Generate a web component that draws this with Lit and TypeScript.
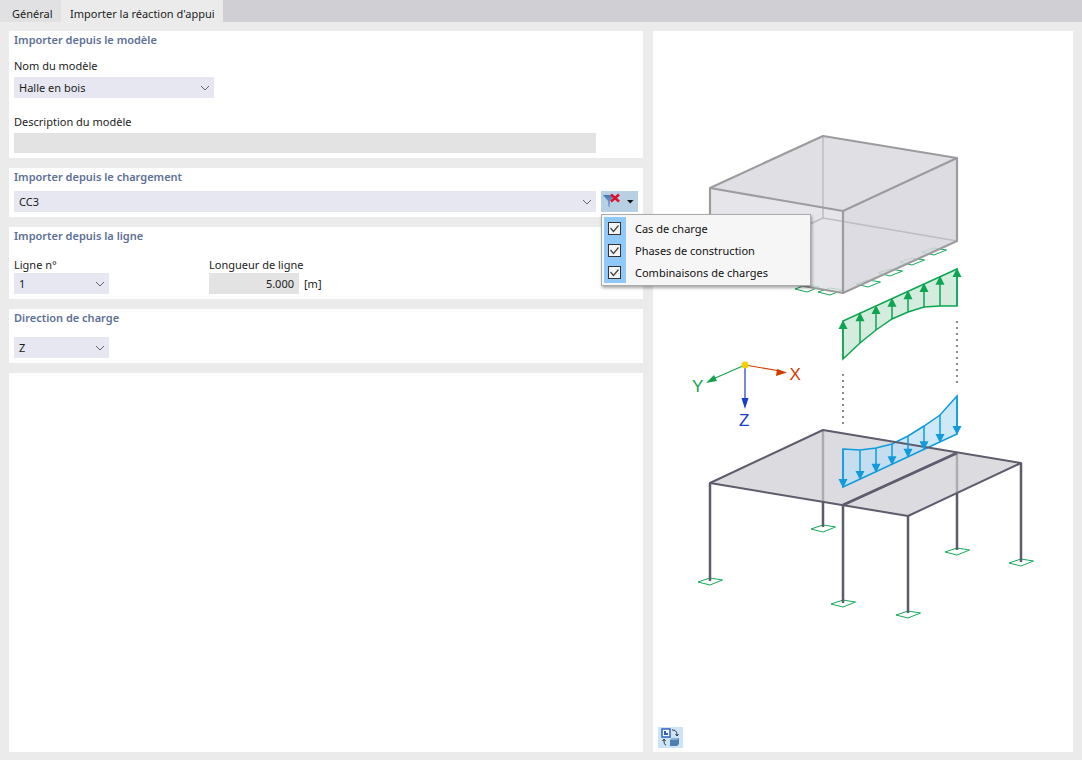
import { LitElement, html, css, svg } from "lit";
import { customElement } from "lit/decorators.js";

const chev = html`<svg class="chev" width="10" height="6" viewBox="0 0 10 6"><path d="M1 1l4 4 4-4" fill="none" stroke="#666" stroke-width="1"/></svg>`;

const GREEN = "#0ea552";
const BLUE = "#0f9bdc";

function support(x: number, y: number) {
  return svg`<path d="M${x - 12} ${y + 1}L${x} ${y - 3}L${x + 12.5} ${y - 1}L${x} ${y + 4}Z" fill="none" stroke="#14a85a" stroke-width="1"/>`;
}

const gx = [843, 860, 876, 892, 908, 924, 940, 957];
const gBottom = [359, 343, 330, 319, 312, 307, 306, 306];
const gTop = gx.map((x) => 321 - ((x - 843) * 52) / 114);
const bTop = [449, 450, 448, 444, 436, 426, 415, 396];
const bBottom = gx.map((x) => 487 - ((x - 843) * 53) / 114);

@customElement("app-root")
export class AppRoot extends LitElement {
  static styles = css`
    :host { display: block; width: 1082px; height: 760px; background: #ebebeb; font-family: "Noto Sans", "Open Sans", sans-serif; font-size: 11px; color: #1c1c1c; overflow: hidden; position: relative; }
    .tabs { display: flex; height: 22px; background: #d0d0d4; }
    .tab { box-sizing: border-box; line-height: 27px; height: 22px; width: 61px; padding-left: 12px; background: #e1e1e3; white-space: nowrap; overflow: hidden; }
    .tab.active { background: #ebebeb; padding-left: 9px; width: 162px; }
    .main { display: grid; grid-template-columns: 634px 420px; gap: 10px; padding: 9px 9px 8px; height: 721px; }
    .left { display: flex; flex-direction: column; gap: 10px; min-height: 0; }
    .sec { background: #fff; box-sizing: border-box; padding: 0 5px; flex: none; display: flex; flex-direction: column; align-items: flex-start; position: relative; }
    .title { color: #5d6f96; font-weight: 600; height: 18px; line-height: 18px; }
    .label { height: 14px; line-height: 14px; }
    .combo { height: 21px; background: #e6e7f1; display: flex; align-items: center; justify-content: space-between; padding: 0 4px 0 5px; box-sizing: border-box; }
    .ro { background: #e3e3e3; height: 20px; }
    .row { display: flex; align-items: flex-start; }
    .col { display: flex; flex-direction: column; }
    .w200 { width: 200px; } .w582 { width: 582px; } .w95 { width: 95px; }
    .num { width: 90px; height: 21px; background: #e3e3e3; line-height: 21px; text-align: right; padding-right: 5px; box-sizing: border-box; }
    .unit { line-height: 21px; margin-left: 5px; }
    .fbtn { width: 37px; height: 21px; background: #b8d0e4; margin-left: 5px; display: flex; align-items: center; }
    .canvas { background: #fff; position: relative; }
    .canvas > svg { display: block; }
    .vbtn { position: absolute; left: 5px; bottom: 4px; width: 25px; height: 21px; background: #cde4f7; display: flex; align-items: center; justify-content: center; }
    .menu { position: absolute; left: 601px; top: 214px; width: 210px; height: 72px; background: #f6f6f6; border: 1px solid #ababab; box-sizing: border-box; box-shadow: 1px 2px 3px rgba(0,0,0,.35); padding: 2px; }
    .item { height: 22px; display: flex; align-items: center; position: relative; color: #111; }
    .strip { width: 22px; height: 22px; background: #90c8f8; display: flex; align-items: center; padding-left: 4px; box-sizing: border-box; margin-right: 9px; }
    .cb { width: 13px; height: 13px; border: 1px solid #333; box-sizing: border-box; background: #f4f4f4; display: block; }
    .grow { flex: 1; }
  `;

  arrowUp(x: number, y: number) {
    return svg`<path d="M${x} ${y - 1}l-4.500 9h9z" fill=${GREEN}/>`;
  }
  arrowDown(x: number, y: number) {
    return svg`<path d="M${x} ${y + 1}l-4.500 -9h9z" fill=${BLUE}/>`;
  }
  curve(xs: number[], ys: number[]) {
    return xs.map((x, i) => `${i ? "L" : "M"}${x} ${ys[i]}`).join("");
  }

  drawing() {
    const gArea = this.curve(gx, gBottom) + `L957 269L843 321Z`;
    const bArea = this.curve(gx, bTop) + `L957 434L843 487Z`;
    return svg`
      <svg width="420" height="721" viewBox="653 31 420 721">
        <!-- supports under the upper box -->
        ${[[807, 288], [830, 291], [868, 283], [890, 272], [912, 261], [934, 251]].map(([x, y]) => support(x, y))}
        <!-- upper box -->
        <path d="M710 188L823 136L957 158L957 241L843 293L710 270Z" fill="#e0e0e5" fill-opacity=".8"/>
        <path d="M710 188L823 136L957 158L843 211Z" fill="#d4d4d8" fill-opacity=".3"/>
        <path d="M843 211L957 158L957 241L843 293Z" fill="#c8c8d0" fill-opacity=".3"/>
        <path d="M823 136L823 218M823 218L710 270M823 218L957 241" fill="none" stroke="#bdbdc2" stroke-width="1.5"/>
        <path d="M710 188L823 136L957 158L843 211ZM710 188L710 270L843 293L843 211M843 293L957 241L957 158" fill="none" stroke="#9c9c9e" stroke-width="2.200" stroke-linejoin="round"/>

        <!-- green diagram -->
        <path d=${gArea} fill="#d3ecde" stroke=${GREEN} stroke-width="1.5"/>
        ${gx.map((x, i) => svg`<path d="M${x} ${gBottom[i]}L${x} ${gTop[i] + 6}" stroke=${GREEN} stroke-width="1.5"/>`)}
        ${gx.map((x, i) => this.arrowUp(x, gTop[i]))}

        <!-- dotted -->
        <path d="M843 374V428M957 321V383" stroke="#4c4c5a" stroke-width="1.3" stroke-dasharray="2 4" fill="none"/>

        <!-- axes -->
        <path d="M745 365L780 371" stroke="#d23c00" stroke-width="1.2"/><path d="M787 372.500l-11 3.500 1-7z" fill="#d23c00"/>
        <path d="M745 365L713 379" stroke="#12a24e" stroke-width="1.2"/><path d="M706 383l8-8 3 6z" fill="#12a24e"/>
        <path d="M745 365V400" stroke="#1a3cc8" stroke-width="1.2"/><path d="M745 409l-3.500-11h7z" fill="#1a3cc8"/>
        <circle cx="745" cy="365" r="3.500" fill="#f4d000"/>
        <text x="789.500" y="380" font-family="Liberation Sans" font-size="17" fill="#d23c00">X</text>
        <text x="692" y="392" font-family="Liberation Sans" font-size="17" fill="#12a24e">Y</text>
        <text x="739" y="426" font-family="Liberation Sans" font-size="17" fill="#1a3cc8">Z</text>

        <!-- supports and columns below the slab -->
        ${[[710, 581], [823, 528], [843, 603], [908, 614], [957, 551], [1021, 562]].map(([x, y]) => support(x, y))}
        ${[[710, 483, 581], [823, 502, 527], [843, 505, 603], [908, 516, 613], [957, 493, 550], [1021, 463, 562]].map(([x, a, b]) => svg`<path d="M${x} ${a}V${b}" stroke="#5e5c6c" stroke-width="2.500"/>`)}

        <!-- slab -->
        <path d="M710 483L823 430L1021 463L908 516Z" fill="#dcdce0"/>
        <path d="M823 431V502M957 454V493" stroke="#ababb2" stroke-width="2.500"/>
        <path d=${bArea} fill="#bcdff4" fill-opacity=".72" stroke=${BLUE} stroke-width="1.5"/>
        <path d="M710 483L823 430L1021 463L908 516Z" fill="none" stroke="#5e5c6c" stroke-width="2" stroke-linejoin="round"/>
        <path d="M843 505L957 453" stroke="#5e5c6c" stroke-width="3"/>
        ${gx.map((x, i) => svg`<path d="M${x} ${bTop[i]}L${x} ${bBottom[i] - 6}" stroke=${BLUE} stroke-width="1.5"/>`)}
        ${gx.map((x, i) => this.arrowDown(x, bBottom[i]))}
      </svg>`;
  }

  render() {
    return html`
      <div class="tabs">
        <div class="tab">Général</div>
        <div class="tab active">Importer la réaction d'appui</div>
        <div class="grow"></div>
      </div>
      <div class="main">
        <div class="left">
          <div class="sec" style="height:127px">
            <div class="title">Importer depuis le modèle</div>
            <div class="label" style="margin-top:10px">Nom du modèle</div>
            <div class="combo w200" style="margin-top:4px">Halle en bois ${chev}</div>
            <div class="label" style="margin-top:17px">Description du modèle</div>
            <div class="combo ro w582" style="margin-top:4px"></div>
          </div>
          <div class="sec" style="height:49px">
            <div class="title">Importer depuis le chargement</div>
            <div class="row" style="margin-top:5px">
              <div class="combo w582">CC3 ${chev}</div>
              <div class="fbtn">
                <svg width="37" height="21" viewBox="0 0 37 21">
                  <defs><linearGradient id="fg" x1="0" y1="0" x2="0" y2="1"><stop offset="0" stop-color="#3f78b4"/><stop offset="1" stop-color="#8fb8dc"/></linearGradient></defs>
                  <path d="M2 4h11l-4 6v7l-2-2v-5z" fill="url(#fg)"/>
                  <path d="M10 3.500l8 7M18 3.500l-8 7" stroke="#e0102a" stroke-width="2.600"/>
                  <path d="M26 9h6.500l-3.250 3.500z" fill="#111"/>
                </svg>
              </div>
            </div>
          </div>
          <div class="sec" style="height:72px">
            <div class="title">Importer depuis la ligne</div>
            <div class="row" style="margin-top:13px">
              <div class="col w95" style="margin-right:100px">
                <div class="label">Ligne n°</div>
                <div class="combo w95" style="margin-top:1px">1 ${chev}</div>
              </div>
              <div class="col">
                <div class="label">Longueur de ligne</div>
                <div class="row" style="margin-top:1px">
                  <div class="num">5.000</div><div class="unit">[m]</div>
                </div>
              </div>
            </div>
          </div>
          <div class="sec" style="height:54px">
            <div class="title">Direction de charge</div>
            <div class="combo w95" style="margin-top:10px">Z ${chev}</div>
          </div>
          <div class="sec grow"></div>
        </div>
        <div class="canvas">
          ${this.drawing()}
          <div class="vbtn">
            <svg width="19" height="19" viewBox="0 0 19 19">
              <rect x="1" y="1" width="8" height="8" fill="#fff" stroke="#2f62c0" stroke-width="1.500"/>
              <path d="M3 7V3h2v2h2v2z" fill="#2f62c0"/>
              <path d="M9 12l2-2h7v6l-2 2H9z" fill="#4f7fb0"/>
              <path d="M9 12l2-2h7l-2 2z" fill="#8fb0cc"/>
              <path d="M11 2c3 0 5 1 5 5M14.500 6l1.500 2 1.500-2" fill="none" stroke="#333" stroke-width="1"/>
              <path d="M5 17c-1.500 0-2-2-2-5M1.500 13l1.500-2 1.500 2" fill="none" stroke="#333" stroke-width="1"/>
            </svg>
          </div>
        </div>
      </div>
      <div class="menu">
        ${["Cas de charge", "Phases de construction", "Combinaisons de charges"].map(
          (t) => html`<div class="item">
            <div class="strip">
              <svg class="cb" viewBox="0 0 11 11"><path d="M1.500 5l3 3.500 5-6" fill="none" stroke="#444" stroke-width="1.200"/></svg>
            </div>${t}
          </div>`
        )}
      </div>
    `;
  }
}
